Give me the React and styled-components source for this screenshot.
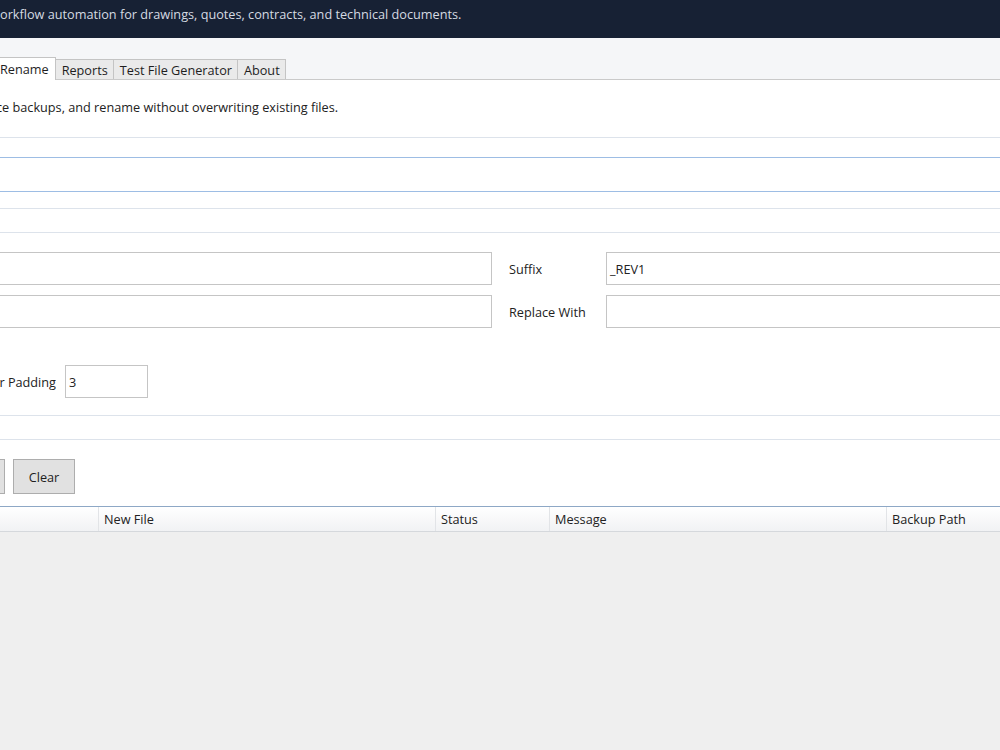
import React from 'react';
import styled, { createGlobalStyle } from 'styled-components';

const GlobalStyle = createGlobalStyle`
  html, body {
    margin: 0;
    padding: 0;
    overflow: hidden;
    background: #efefef;
  }
  body {
    font-family: "Open Sans", "Noto Sans", sans-serif;
    font-size: 12.7px;
    color: #222;
  }
  * { box-sizing: border-box; }
`;

const Window = styled.div`
  width: 1000px;
  height: 750px;
  overflow: hidden;
  display: flex;
  flex-direction: column;
  background: #efefef;
`;

const Banner = styled.header`
  height: 38px;
  flex: none;
  background: #172134;
  color: #d5dae2;
  padding-top: 6px;
  line-height: 17px;
  white-space: nowrap;
`;

const TabStrip = styled.nav`
  height: 42px;
  flex: none;
  display: flex;
  align-items: flex-end;
  background: #f5f6f8;
  border-bottom: 1px solid #cacaca;
`;

const Tab = styled.div`
  height: ${p => (p.$active ? 23 : 20)}px;
  margin-bottom: ${p => (p.$active ? -1 : 0)}px;
  margin-left: ${p => (p.$first ? -7 : 0)}px;
  padding: 0 ${p => (p.$active ? 6 : 5)}px 0 6px;
  display: flex;
  align-items: center;
  border: 1px solid #c4c4c4;
  border-bottom: none;
  border-left: ${p => (p.$first ? '1px solid #c4c4c4' : 'none')};
  background: ${p => (p.$active ? '#fff' : '#eaeaea')};
  white-space: nowrap;
  color: #1e1e1e;
`;

const Content = styled.main`
  flex: none;
  background: #fff;
  padding: 18px 0 12px;
  display: flex;
  flex-direction: column;
`;

const Intro = styled.p`
  margin: 0 0 0 -4px;
  line-height: 18px;
  white-space: nowrap;
`;

const Rule = styled.div`
  height: 1px;
  margin-top: ${p => p.$gap}px;
  background: #dde3eb;
`;

const PathBox = styled.div`
  height: 35px;
  margin-top: ${p => p.$gap}px;
  border-top: 1px solid #9dbde4;
  border-bottom: 1px solid #9dbde4;
`;

const FieldGrid = styled.div`
  display: grid;
  grid-template-columns: 502px 114px 404px;
  row-gap: 10px;
  margin: 19px 0 0 -10px;
`;

const Input = styled.div`
  height: 33px;
  width: ${p => p.$w || 'auto'};
  border: 1px solid #c5c5c5;
  background: #fff;
  padding-left: 3px;
  display: flex;
  align-items: center;
  white-space: nowrap;
`;

const Label = styled.span`
  padding-left: 17px;
  display: flex;
  align-items: center;
  white-space: nowrap;
`;

const PaddingRow = styled.div`
  display: flex;
  align-items: center;
  gap: 9px;
  margin-top: 37px;
`;

const ClipLabel = styled.span`
  width: 56px;
  display: flex;
  justify-content: flex-end;
  overflow: hidden;
  white-space: nowrap;
`;

const ButtonRow = styled.div`
  display: flex;
  gap: 8px;
  margin: 19px 0 0 -70px;
`;

const Button = styled.button`
  height: 35px;
  min-width: ${p => p.$w}px;
  border: 1px solid #adadad;
  background: #e1e1e1;
  font: inherit;
  color: #1e1e1e;
  padding: 0 10px;
`;

const GridHead = styled.div`
  flex: none;
  display: grid;
  grid-template-columns: 98px 337px 114px 337px 1fr;
  height: 26px;
  border-top: 1px solid #8ea8c6;
  border-bottom: 1px solid #d5d8dc;
  background: linear-gradient(#ffffff, #f1f2f4);
`;

const HeadCell = styled.div`
  border-left: ${p => (p.$first ? 'none' : '1px solid #e2e4e7')};
  padding-left: 5px;
  display: flex;
  align-items: center;
  white-space: nowrap;
  overflow: hidden;
`;

const Empty = styled.div`
  flex: 1;
  background: #efefef;
`;

export default function App() {
  return (
    <>
      <GlobalStyle />
      <Window>
        <Banner>orkflow automation for drawings, quotes, contracts, and technical documents.</Banner>
        <TabStrip>
          <Tab $active $first>Rename</Tab>
          <Tab>Reports</Tab>
          <Tab>Test File Generator</Tab>
          <Tab>About</Tab>
        </TabStrip>
        <Content>
          <Intro>ce backups, and rename without overwriting existing files.</Intro>
          <Rule $gap={21} />
          <PathBox $gap={19} />
          <Rule $gap={16} />
          <Rule $gap={23} />
          <FieldGrid>
            <Input />
            <Label>Suffix</Label>
            <Input>_REV1</Input>
            <Input />
            <Label>Replace With</Label>
            <Input />
          </FieldGrid>
          <PaddingRow>
            <ClipLabel>Number Padding</ClipLabel>
            <Input $w="83px">3</Input>
          </PaddingRow>
          <Rule $gap={17} />
          <Rule $gap={23} />
          <ButtonRow>
            <Button $w={75} aria-label="Preview" />
            <Button $w={62}>Clear</Button>
          </ButtonRow>
        </Content>
        <GridHead>
          <HeadCell $first />
          <HeadCell>New File</HeadCell>
          <HeadCell>Status</HeadCell>
          <HeadCell>Message</HeadCell>
          <HeadCell>Backup Path</HeadCell>
        </GridHead>
        <Empty />
      </Window>
    </>
  );
}
